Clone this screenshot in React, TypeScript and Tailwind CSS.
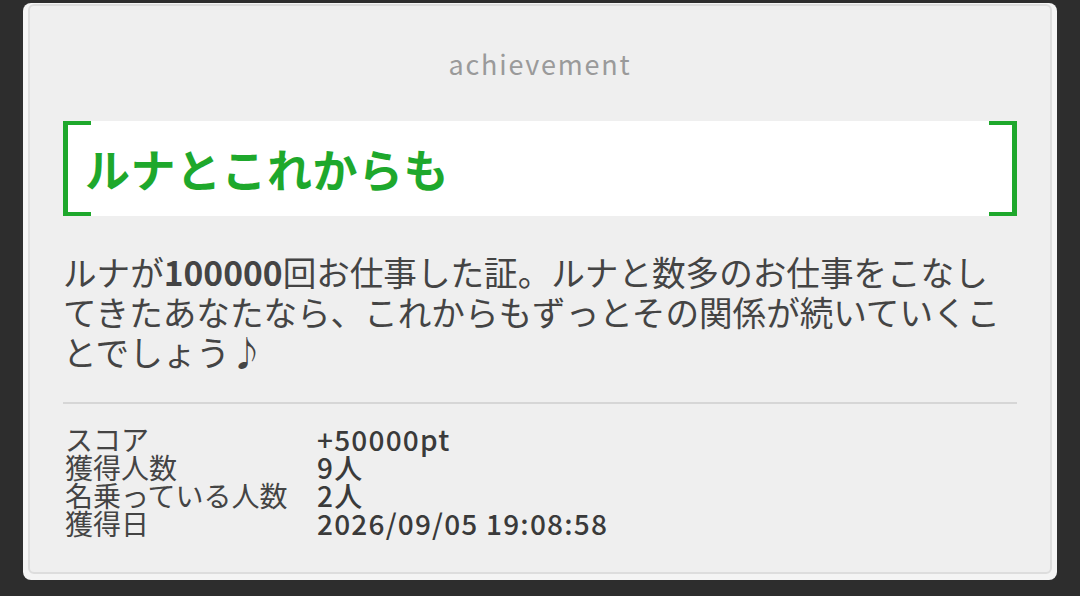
import React from "react";

const rows: { label: string; value: string }[] = [
  { label: "スコア", value: "+50000pt" },
  { label: "獲得人数", value: "9人" },
  { label: "名乗っている人数", value: "2人" },
  { label: "獲得日", value: "2026/09/05 19:08:58" },
];

export default function App() {
  return (
    <div className="h-[596px] w-full bg-[#2d2d2d] px-[23px] pt-[3px] pb-[16px] font-['Noto_Sans_CJK_JP',sans-serif] text-[#444444]">
      <div className="h-full rounded-[8px] bg-[#f4f4f4] px-[5px] pt-[1px] pb-[6px]">
        <div className="h-full rounded-[6px] border-2 border-[#dddddd] bg-[#efefef] px-[33px] pt-[38px]">
          {/* header */}
          <div className="text-center text-[27px] leading-[40px] tracking-[1.8px] text-[#9a9a9a]">
            achievement
          </div>

          {/* title with brackets */}
          <div className="relative mt-[37px] flex h-[95px] items-center bg-white pl-[22px]">
            <span className="absolute left-0 top-0 h-full w-[5px] bg-[#1ea82c]" />
            <span className="absolute left-0 top-0 h-[4px] w-[28px] bg-[#1ea82c]" />
            <span className="absolute bottom-0 left-0 h-[4px] w-[28px] bg-[#1ea82c]" />
            <span className="absolute right-0 top-0 h-full w-[5px] bg-[#1ea82c]" />
            <span className="absolute right-0 top-0 h-[4px] w-[28px] bg-[#1ea82c]" />
            <span className="absolute bottom-0 right-0 h-[4px] w-[28px] bg-[#1ea82c]" />
            <h1 className="text-[45px] font-bold leading-none tracking-[0.5px] text-[#1ea82c]">ルナとこれからも</h1>
          </div>

          {/* description */}
          <p className="mt-[36px] whitespace-nowrap text-[33.6px] leading-[40px] text-[#444444]">
            ルナが<span className="font-bold">100000</span>回お仕事した証。ルナと数多のお仕事をこなし
            <br />
            てきたあなたなら、これからもずっとその関係が続いていくこ
            <br />
            とでしょう♪
          </p>

          <div className="mt-[30px] h-[2px] bg-[#d6d6d6]" />

          {/* stats */}
          <div className="mt-[21px] grid grid-cols-[254px_1fr] text-[28px] leading-[28px]">
            {rows.map((r) => (
              <React.Fragment key={r.label}>
                <div className="pl-[2px]">{r.label}</div>
                <div className="font-medium tracking-[1.2px] text-[#3a3a3a]">{r.value}</div>
              </React.Fragment>
            ))}
          </div>
        </div>
      </div>
    </div>
  );
}
